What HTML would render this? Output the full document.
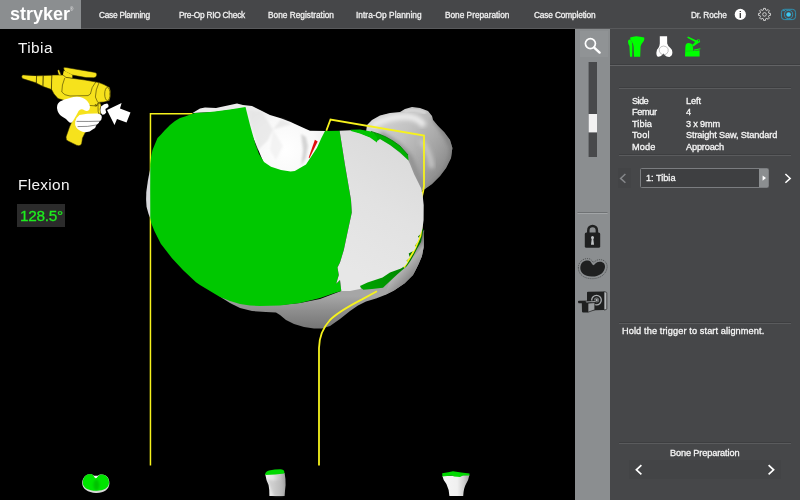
<!DOCTYPE html>
<html><head><meta charset="utf-8"><title>Bone Preparation</title>
<style>
html,body{margin:0;padding:0;background:#000;}
body{width:800px;height:500px;position:relative;overflow:hidden;font-family:"Liberation Sans",sans-serif;color:#fff;}
.abs{position:absolute;white-space:nowrap;}
.nav,.t,.big,#logo span,#logo i{will-change:transform;}
#top{left:0;top:0;width:800px;height:28px;background:#464749;border-bottom:1px solid #58595b;}
#logo{left:0;top:0;width:81px;height:29px;background:#8b8e90;}
#logo span{position:absolute;left:9.6px;top:3px;font-size:18px;font-weight:bold;line-height:22px;}
#logo i{position:absolute;left:69.6px;top:6.5px;font-size:4.5px;line-height:5px;font-style:normal;color:#e8e8e8;}
.nav{top:9.6px;font-size:8.3px;line-height:11px;color:#f0f0f0;-webkit-text-stroke:0.3px #f0f0f0;}
#side{left:575px;top:29px;width:35px;height:471px;background:#8b8e90;}
#panel{left:610px;top:29px;width:190px;height:471px;background:#464749;}
.hl{position:absolute;left:619px;width:171.5px;height:1px;background:#5a5b5d;border-top:1px solid #3d3e40;}
.t{font-size:9.2px;line-height:12px;color:#f6f6f6;-webkit-text-stroke:0.3px #f6f6f6;}
.big{font-size:15.4px;line-height:18px;color:#f4f4f4;}
</style></head><body>
<div id="top" class="abs"></div>
<div id="logo" class="abs"><span>stryker</span><i>®</i></div>
<div class="abs nav" style="left:99.4px;letter-spacing:-0.247px">Case Planning</div>
<div class="abs nav" style="left:179.4px;letter-spacing:-0.228px">Pre-Op RIO Check</div>
<div class="abs nav" style="left:268px;letter-spacing:0.002px">Bone Registration</div>
<div class="abs nav" style="left:356px;letter-spacing:0.036px">Intra-Op Planning</div>
<div class="abs nav" style="left:445px;letter-spacing:-0.012px">Bone Preparation</div>
<div class="abs nav" style="left:534.4px;letter-spacing:-0.146px">Case Completion</div>
<div class="abs nav" style="left:690.6px;letter-spacing:-0.136px">Dr. Roche</div>

<div id="side" class="abs"></div>
<div id="panel" class="abs"></div>

<div class="abs big" style="left:18px;top:38.8px;letter-spacing:0.42px">Tibia</div>
<div class="abs big" style="left:18px;top:175.9px;letter-spacing:0.31px">Flexion</div>
<div class="abs" style="left:17px;top:204px;width:48px;height:23px;background:#2b2b2b"></div>
<div class="abs big" style="left:20.2px;top:207.1px;color:#1eec1e;-webkit-text-stroke:0.3px #1eec1e;letter-spacing:-0.29px">128.5°</div>

<div class="hl" style="top:64px;left:610px;width:190px;background:#626365"></div>
<div class="hl" style="top:87px"></div>
<div class="hl" style="top:154px"></div>
<div class="hl" style="top:322px"></div>
<div class="hl" style="top:442px"></div>

<div class="abs t" style="left:631.7px;top:94.5px;letter-spacing:-0.597px">Side</div>
<div class="abs t" style="left:631.7px;top:106px;letter-spacing:-0.362px">Femur</div>
<div class="abs t" style="left:631.7px;top:117.5px;letter-spacing:0.080px">Tibia</div>
<div class="abs t" style="left:631.7px;top:129px;letter-spacing:0.214px">Tool</div>
<div class="abs t" style="left:631.7px;top:140.5px;letter-spacing:0.139px">Mode</div>
<div class="abs t" style="left:685.7px;top:94.5px;letter-spacing:-0.076px">Left</div>
<div class="abs t" style="left:685.7px;top:106px">4</div>
<div class="abs t" style="left:685.7px;top:117.5px;letter-spacing:-0.172px">3 x 9mm</div>
<div class="abs t" style="left:685.7px;top:129px;letter-spacing:-0.130px">Straight Saw, Standard</div>
<div class="abs t" style="left:685.7px;top:140.5px;letter-spacing:-0.178px">Approach</div>

<div class="abs" style="left:617.5px;top:167.5px;width:13.5px;height:20px;background:#434446"></div>
<div class="abs" style="left:640.2px;top:168px;width:129.3px;height:19.5px;border:1px solid #7b7d80;background:#3e3f41;box-sizing:border-box;border-radius:1.5px"></div>
<div class="abs" style="left:759.3px;top:169px;width:9.2px;height:17.5px;background:#8b8e90"></div>
<div class="abs t" style="left:645.7px;top:171.8px;letter-spacing:-0.018px">1: Tibia</div>
<div class="abs t" style="left:622px;top:324.5px;letter-spacing:0.110px">Hold the trigger to start alignment.</div>
<div class="abs" style="left:628.7px;top:459.5px;width:152px;height:19px;background:#434446"></div>
<div class="abs t" style="left:670px;top:446.5px;letter-spacing:-0.134px">Bone Preparation</div>

<svg class="abs" style="left:0;top:0" width="800" height="500" viewBox="0 0 800 500">
<defs>
<linearGradient id="gLump" x1="372" y1="112" x2="452" y2="168" gradientUnits="userSpaceOnUse">
<stop offset="0" stop-color="#d6d6d6"/><stop offset="0.4" stop-color="#c2c2c2"/><stop offset="0.75" stop-color="#a2a2a2"/><stop offset="1" stop-color="#868686"/>
</linearGradient>
<linearGradient id="gRim" x1="0" y1="296" x2="0" y2="328" gradientUnits="userSpaceOnUse">
<stop offset="0" stop-color="#a6a6a6"/><stop offset="0.45" stop-color="#8e8e8e"/><stop offset="1" stop-color="#767676"/>
</linearGradient>
<linearGradient id="gRimR" x1="404" y1="256" x2="419" y2="270" gradientUnits="userSpaceOnUse">
<stop offset="0" stop-color="#6a6a6a"/><stop offset="0.4" stop-color="#b2b2b2"/><stop offset="1" stop-color="#868686"/>
</linearGradient>
<radialGradient id="gNotch" cx="285" cy="150" r="45" gradientUnits="userSpaceOnUse">
<stop offset="0" stop-color="#ffffff"/><stop offset="0.7" stop-color="#f8f8f8"/><stop offset="1" stop-color="#ececec"/>
</radialGradient>
</defs>
<!-- femoral lump upper right -->
<clipPath id="cLump"><path d="M367,125 L372,120 L380,115.6 L390,113 L400,112 L405,109 L412,107 L420,108 L428,111 L432,116 L433,120 L438,126 L444,132 L450,140 L452.4,148 L451,158 L446,168 L440,176 L432,184 L425,189 L420,192 L400,170 L380,150 L366,132 Z"/></clipPath>
<filter id="b2" x="-30%" y="-30%" width="160%" height="160%"><feGaussianBlur stdDeviation="2.2"/></filter>
<filter id="b1" x="-30%" y="-30%" width="160%" height="160%"><feGaussianBlur stdDeviation="1.2"/></filter>
<g clip-path="url(#cLump)">
<rect x="360" y="100" width="100" height="100" fill="url(#gLump)"/>
<path d="M372,126 Q390,115 410,117 Q420,119 424,126" fill="none" stroke="#ececec" stroke-width="6" filter="url(#b2)"/>
<path d="M404,112 Q414,108 426,113" fill="none" stroke="#d8d8d8" stroke-width="3" filter="url(#b1)"/>
<path d="M380,134 Q398,142 410,158 Q416,172 422,188" fill="none" stroke="#8e8e8e" stroke-width="5" filter="url(#b2)"/>
<path d="M434,118 Q446,134 452,148 Q452,164 440,178 L428,190" fill="none" stroke="#7c7c7c" stroke-width="4" filter="url(#b2)"/>
<path d="M420,140 Q430,150 432,168" fill="none" stroke="#c6c6c6" stroke-width="5" filter="url(#b2)"/>
</g>
<!-- lower gray rim -->
<path fill="url(#gRim)" d="M218,294 L222,298 L230,303 L240,308 L252,311 L266,312 L276,312.4 L280,315 L286,320 L294,324 L304,327 L314,328.4 L322,328.4 L330,326 L340,319 L350,311 L358,305.6 L366,301.6 L376,298.6 L385,295 L394,290.5 L404.7,283.3 L413,275 L415.9,269.5 L418.6,264 L421.9,256.3 L423.6,247.5 L424.1,230 L420,235 L405,266 L360,286 L341,291 L320,299 L300,303 L280,305 L260,305 L242,303 Z"/>
<path fill="url(#gRimR)" d="M424.1,230 L423.6,247.5 L421.9,256.3 L418.6,264 L415.9,269.5 L413,275 L404.7,283.3 L394,290.5 L385,295 L390,280 L405,266 L410,256 L417,243 L421,234 Z"/>
<!-- dark green lower right band with teeth -->
<linearGradient id="gDG" x1="362" y1="288" x2="420" y2="240" gradientUnits="userSpaceOnUse">
<stop offset="0" stop-color="#00a400"/><stop offset="0.5" stop-color="#008c00"/><stop offset="1" stop-color="#006c00"/>
</linearGradient>
<path fill="url(#gDG)" d="M423.4,229 L422.6,234.3 L421,242 L417.2,248.6 L414.4,254.1 L410.6,260.7 L406.8,266.2 L401.4,270.8 L396.6,275 L392.5,278.8 L383,287.8 L372,289 L363.4,289.8 L359.8,287 L370,270 L400,245 L418,228 Z"/>
<!-- yellow lines -->
<g fill="none" stroke="#f6f21c" stroke-linejoin="miter">
<path stroke-width="1.5" d="M192.5,113.8 L150.45,113.8 L150.45,465.5"/>
<path stroke-width="1.8" d="M326.3,130.7 L330.5,119.5 L424,135.5 L424,186 L423.2,191 L421.6,198 L421.6,226 L421,232 L420.4,236 L418.3,241 L415.7,247 L412.7,253 L409.7,258 L406.7,263 L403.8,267.5"/>
<path stroke-width="1.8" d="M377,291.2 L362,299.4 C350,305.6 338,312 330,320 C323,327.6 319.2,336 319,348 L319,465.5"/>
</g>
<linearGradient id="gPlan" x1="350" y1="270" x2="420" y2="150" gradientUnits="userSpaceOnUse"><stop offset="0" stop-color="#e7e7e7"/><stop offset="0.5" stop-color="#e2e2e2"/><stop offset="1" stop-color="#dadada"/></linearGradient>
<!-- white bone (notch + left edge) -->
<path fill="url(#gNotch)" d="M192.5,113 L200,108.5 L205,107.5 L216,108 L230,105 L237,103.5 L243,105 L252,106 L260,110 L270,115 L280,118 L290.6,122 L306,129 L310,130.7 L326,131 L320,160 L295,175 L265,166 L250,130 L245,108 L215,112 Z"/>
<path fill="#d8d8dc" d="M150.6,167 Q147.6,180 146.3,192 Q145.8,200 146.6,207 Q148.2,214 150.6,219 L154,219 L154,167 Z"/>
<!-- shading in notch -->
<g filter="url(#b1)">
<path fill="#bcbcbc" opacity="0.6" d="M301,134 L306,137 L308,146 L306,158 L301,166 L303,150 Z"/>
<path fill="#e4e4e4" opacity="0.7" d="M262,112 L273,129.6 L268,140 L258,150 L252,128 L248,110 Z"/>
<path fill="#e6e6e6" opacity="0.8" d="M273,129.6 L292,124 L281,119 Z"/>
<path fill="#ececec" opacity="0.6" d="M273,129.6 L283,146 L276,160 L270,150 Z"/>
</g>
<!-- main green -->
<path fill="#00c800" d="M152.5,150 L155,144 L157.5,138 L161,134.5 L165,130 L170,125 L175,121 L180,118 L185,116.5 L189,115 L195,113 L205,112.5 L215,111.5 L230,109.5 L245.5,107 L250,125 L255.6,145 L259,154 L264,162 L271,166.7 L281,170 L290.6,171.6 L294.8,171 L306,164.6 L311.6,156 L317,147.8 L321.4,138 L325,131 L339.6,130.7 L345,165 L351,200 L351.8,212.5 L347.5,232.5 L343.8,250 L340,262.5 L337.5,267.5 L338.8,275 L336.2,283.8 L340,280 L341.3,291 L336,292.4 L320,298 L300,303 L280,305.6 L260,306 L250,305.6 L240,304 L230,301 L220,297 L210,291 L200,285 L196,282.2 L183.2,270.2 L172,258.2 L160.8,243.8 L154.4,231 L151.2,223 L150.3,218 L150.2,190 L150.3,164 L151.2,156 Z"/>
<!-- planar white -->
<path fill="url(#gPlan)" d="M339.6,130.7 L351,130.2 L360,133 L370,137 L377,142.5 L380,139 L390,145 L400,153 L408,160 L410,164 L414,174 L418,182 L421,188 L422.5,194 L423.7,205 L423.6,220 L422.5,228.8 L420.3,234.3 L418,236.5 L419.2,238.2 L417.5,242 L414.8,245.9 L415.9,247.5 L413.7,250.8 L408.7,253.6 L409.8,257.4 L406.5,260.7 L407.6,262.4 L404.3,266.2 L401,268.4 L390,272.6 L382.5,277.5 L367.5,282.5 L360,286 L361,288.8 L350,291 L341.3,291 L340,280 L336.2,283.8 L338.8,275 L337.5,267.5 L340,262.5 L343.8,250 L347.5,232.5 L351.8,212.5 L351,200 L345,165 Z"/>
<!-- green bits top -->
<path fill="#00c400" d="M350.6,129.8 L360,129.5 L371,131.4 L377,136 L377,142.5 L370,137.4 L360,133.4 L351,131 Z"/>
<path fill="#00b000" d="M371,131.4 L379,134 L386,137 L393,141 L400,146 L408,155 L408.6,160.4 L400,152.6 L390,145 L380,139 L377,141 L377,137 Z"/>
<path fill="none" stroke="#007c00" stroke-width="0.8" d="M371,131.4 L379,134 L386,137 L393,141 L400,146 L408,155"/>
<!-- red sliver -->
<path fill="#e00c0c" d="M314.9,139.8 L317.7,141.4 L309.4,158.2 L308.7,157.4 Z"/>
<!-- tool icon -->
<g id="tool" stroke-linejoin="round" stroke-linecap="round">
<g fill="#f6e21c" stroke="#2a2400" stroke-width="0.55">
<!-- handle -->
<path d="M80,106 L73,119 L69.5,127 L66,137 Q65.8,140 68,141 L76.5,145.2 Q80.8,146.6 81.7,143.6 L82.5,138 L85.5,132 L93,122 L100,112 L100,102 L84,100 Z"/>
<!-- top rail -->
<path d="M63.6,68.6 Q63.6,66.8 66,67.5 L95,72.4 Q97.6,73.2 96.6,75.6 Q96,78 93.5,77.7 L86,77.6 L72,75 L65,71.6 Z"/>
<path stroke="none" d="M63.8,70.4 L72.4,75 L72.4,78 L64.6,77.6 L62.8,75.2 Z"/>
<!-- small tab -->
<path d="M57.6,70.6 Q58.6,69 59.4,70.6 L61.4,75.4 L59,76 Z"/>
<!-- nose cone -->
<path d="M22.4,75 Q20.8,76.8 22.4,78.6 L36.6,83 L37,76 Z"/>
<path d="M37,75.8 L43.4,75.6 L43.2,86.6 L36.6,83.2 Z"/>
<path d="M43.5,75.5 L52.2,75.2 L51.6,89.6 L43.2,86.6 Z"/>
<!-- main body -->
<path d="M52.2,75 L63,75 L66,77.4 L85,80 L99,82.6 L104,84.6 L109.6,87.6 Q111.6,94 109.4,100.6 L104,102 L98,102.4 L97,106 L84,105 L80,108 L72,103 L67,101.2 L58,98.6 L54,94 L51.6,89.6 Z"/>
<!-- body panel -->
<path fill="none" d="M64.6,78.4 Q61.6,85 61.8,92 Q64,95.4 70,96 L88,95.6 L90.4,94 Q91.4,87 95.6,82.2"/>
<!-- rear cylinder -->
<path fill="none" d="M99,82.6 Q95.4,90 95.4,97 L97.4,101.6"/>
<ellipse cx="107.4" cy="94" rx="2.7" ry="6.6"/>
<!-- trigger -->
<path d="M98.6,103.4 Q101.6,103 101,106 Q99.4,109 100.6,112 Q101.4,114.6 99.4,114.4 Q97.6,112 98,108 Z"/>
<circle cx="95.6" cy="105.2" r="0.7"/>
</g>
<g fill="#ffffff" stroke="none">
<!-- hand back -->
<path d="M70,98 Q75,96.2 80,97 Q85,98 87.6,101.6 Q91,106 89.4,109.4 Q87,112.6 83,109.6 Q80.4,108.6 78.6,111 L76.5,115 L73,121 Q71,124.4 68.4,121.6 Q66,118.6 62,116.6 Q57.6,113.6 57,108 Q57,103.6 60,101.6 Q64,99 70,98 Z"/>
<!-- fingers -->
<path d="M79.5,115 Q88,113.4 97.4,113.6 Q102,114 101.8,117.4 Q101.8,120 99.6,121.2 Q99,123.6 96.4,125 Q96,128 92.6,129.6 Q90,132.4 85,132.2 Q79.6,131.6 76.6,128 Q74.4,125 75.2,121.6 Q76,117.4 79.5,115 Z"/>
<!-- index finger -->
<path d="M101,106.4 Q104,103.4 107.2,103.4 Q109.2,104.6 108.4,107 L105.4,109 Q105.6,111 106.2,112.4 Q104.6,115 102.2,114.6 Q100.4,113 100.4,110 Z"/>
<!-- arrow -->
<path d="M107,110 L121.6,103 L120,108.5 L130.5,112.5 L126.5,122.5 L117,119 L114.5,125 Z"/>
</g>
<!-- finger separators -->
<g fill="none" stroke="#1a1a1a" stroke-width="0.5">
<path d="M77,121.4 Q88,121.6 99.6,121.2"/>
<path d="M78,126.6 Q88,127 96.4,125"/>
</g>
</g>
<!-- top bar icons -->
<circle cx="740.3" cy="14.4" r="5.6" fill="#ffffff"/>
<text x="740.3" y="17.7" font-family="Liberation Sans, sans-serif" font-weight="bold" font-size="9.4" text-anchor="middle" fill="#333">i</text>
<g fill="none" stroke="#cccccc" stroke-width="1" stroke-linejoin="round">
<path d="M763.45,9.92 L763.50,8.38 L765.50,8.38 L765.55,9.92 L766.93,10.49 L768.05,9.44 L769.46,10.85 L768.41,11.97 L768.98,13.35 L770.52,13.40 L770.52,15.40 L768.98,15.45 L768.41,16.83 L769.46,17.95 L768.05,19.36 L766.93,18.31 L765.55,18.88 L765.50,20.42 L763.50,20.42 L763.45,18.88 L762.07,18.31 L760.95,19.36 L759.54,17.95 L760.59,16.83 L760.02,15.45 L758.48,15.40 L758.48,13.40 L760.02,13.35 L760.59,11.97 L759.54,10.85 L760.95,9.44 L762.07,10.49 Z"/>
<circle cx="764.5" cy="14.4" r="1.8"/>
</g>
<g fill="none" stroke="#2b9fc6" stroke-width="0.85">
<rect x="781.4" y="9.3" width="14.2" height="10.3" rx="3.2"/>
<circle cx="788.6" cy="14.5" r="4.1"/>
<path d="M783,10.6 L785,10.6" stroke-width="0.9"/>
</g>
<circle cx="788.6" cy="14.5" r="2.3" fill="#3ec6f0"/>
<!-- sidebar -->
<rect x="580" y="31" width="28" height="26" fill="#909395"/>
<circle cx="590.4" cy="43.6" r="5" fill="none" stroke="#ffffff" stroke-width="1.7"/>
<path d="M594.2,47.6 L599.6,52.6" stroke="#ffffff" stroke-width="2.4" stroke-linecap="round"/>
<rect x="588.6" y="62" width="8.4" height="95" fill="#48494b"/>
<rect x="588.6" y="114" width="8.4" height="18.4" fill="#f2f2f2"/>
<rect x="577.5" y="212" width="30" height="1" fill="#6f7274"/>
<rect x="577.5" y="213" width="30" height="1" fill="#a2a5a7"/>
<!-- lock -->
<rect x="584.8" y="232.5" width="15.4" height="15.3" rx="1.6" fill="#1f2020"/>
<path d="M588.3,233 L588.3,230.4 A4.3,4.5 0 0 1 596.9,230.4 L596.9,233" fill="none" stroke="#1f2020" stroke-width="2.5"/>
<circle cx="592.5" cy="237.4" r="1.5" fill="#c0c3c5"/>
<path d="M591.8,238 L593.2,238 L594,244.8 L591,244.8 Z" fill="#c0c3c5"/>
<!-- kidney -->
<path d="M580.3,268 C580.3,262.5 584.5,260.2 588,260.6 C591.4,261 592,265 593.2,265.2 C594.6,265.2 595.6,262 599.6,261.8 C603.2,261.6 605.2,264 605,267 C604.6,272 600,276.8 591.6,276.6 C584.6,276.4 580.3,272.6 580.3,268 Z" fill="#1f2020"/>
<path d="M578.4,268 C578.2,261 584,258.2 588.4,258.6 C591.6,259 592.6,262 593.4,262.2 C594.6,262.2 596,259.6 599.8,259.6 C604.6,259.6 607.4,263 607.1,267.2 C606.6,273.6 600.6,278.9 591.6,278.7 C583.6,278.5 578.4,274 578.4,268 Z" fill="none" stroke="#1f2020" stroke-width="0.5" stroke-dasharray="1.1 0.9"/>
<!-- CT scanner -->
<g>
<path d="M587,292.6 Q587,291.7 588,291.7 L604,291.4 L604,310 L587,310.6 Z" fill="#1f2020"/>
<path d="M604,291.6 L606.2,292.2 Q606.8,292.4 606.8,293 L606.8,308.6 Q606.8,309.4 606,309.6 L604,310 Z" fill="#b4b7b9" stroke="#1f2020" stroke-width="0.7"/>
<circle cx="596.5" cy="300.1" r="4.8" fill="none" stroke="#a9acae" stroke-width="1.3"/>
<circle cx="596.5" cy="300.1" r="2.5" fill="#85888a"/>
<circle cx="596.5" cy="300.1" r="1.6" fill="none" stroke="#1f2020" stroke-width="0.5"/>
<circle cx="596.7" cy="300.1" r="0.8" fill="#c4c7c9"/>
<path d="M578,301.4 Q578,300.7 579,300.7 L595.6,300.4 L595.6,302.6 L588,303.2 L578.6,303.2 Q578,302.6 578,301.4 Z" fill="#1f2020"/>
<path d="M585.4,301.5 L595.6,301 L595.6,302 L586.6,302.4 Z" fill="#9c9fa1"/>
<path d="M581.8,303 L588,303 L588,312.4 L582.8,312.4 Q582,312.4 582,311.6 Z" fill="#1f2020"/>
<path d="M588,303.2 L594.8,302.6 L594.8,309.8 L588,312.2 Z" fill="#9a9d9f" stroke="#1f2020" stroke-width="0.7"/>
</g>
<!-- panel icons -->
<g fill="#00ff00">
<path d="M630.2,37.6 Q633,36.6 636.3,36.3 Q640,36.6 644.2,37.6 Q644.6,39.4 643.8,41 Q641.4,43.6 640.6,46.4 L640.2,56.8 L634,56.8 L633.6,46.4 Q633.2,43.6 631.6,41.6 Q629.8,39.6 630.2,37.6 Z"/>
<path d="M628,41.4 Q628.2,39.6 629.6,39.6 Q631.4,40.2 632,42.6 L632.4,46 L632.2,56.8 L630,56.8 L629.4,46 Q628,43.6 628,41.4 Z"/>
<path d="M685.4,47 Q685.4,43 688.6,43 Q691,43 692.6,44.6 L693.4,51 L699.6,50.2 L699.6,56.4 L685,56.4 Z"/>
<path d="M687.2,37.8 L688,36.6 L697,40.8 L696.2,42.4 Z"/>
<path d="M692.4,45 L697.4,39.6 L699.6,39.4 L700.2,42 L697.6,43.6 L693.4,46.6 Z"/>
<path d="M694,49.4 L700.4,48.2 L700.4,49.2 L694,50.8 Z"/>
</g>
<circle cx="698.6" cy="40.8" r="0.7" fill="#464749"/>
<path d="M685.8,51.2 L693,50.8" stroke="#22a822" stroke-width="0.4" fill="none"/>
<path d="M659.8,36.2 L667.1,36.2 L667.2,43.6 Q668,46.6 670.4,48 Q672.6,49.6 672.4,52.6 Q672.2,56.4 669.4,56.9 Q666.4,57 664.6,55 L663.4,53.6 L662.2,55 Q660.4,57 658,56.8 Q656.2,56.2 656.4,52.6 Q656.6,49.4 658.4,48 Q659.6,46.6 659.8,43.6 Z" fill="#ffffff"/>
<path d="M663.6,46 Q667,46.2 668.2,49 Q668.8,52 666.4,54 Q663.8,55.8 661.2,54 Q658.8,52 659.2,49 Q660.4,46.2 663.6,46 Z" fill="none" stroke="#868686" stroke-width="0.5"/>
<!-- chevrons -->
<g fill="none" stroke-width="1.5" stroke-linecap="butt" stroke-linejoin="miter">
<path d="M625.4,174 L620.6,178.4 L625.4,182.8" stroke="#85878a"/>
<path d="M785.4,174 L790.2,178.4 L785.4,182.8" stroke="#ffffff"/>
<path d="M641.4,465.2 L636.4,469.8 L641.4,474.4" stroke="#ffffff" stroke-width="1.7"/>
<path d="M768.6,465.2 L773.6,469.8 L768.6,474.4" stroke="#ffffff" stroke-width="1.7"/>
</g>
<path d="M762.6,175.4 L766,178.1 L762.6,180.8 Z" fill="#ffffff"/>
<!-- thumbnails -->
<defs>
<linearGradient id="gT2" x1="266" y1="0" x2="286" y2="0" gradientUnits="userSpaceOnUse">
<stop offset="0" stop-color="#f0f0f0"/><stop offset="0.35" stop-color="#e4e4e4"/><stop offset="0.7" stop-color="#c4c4c4"/><stop offset="1" stop-color="#9a9a9a"/>
</linearGradient>
<linearGradient id="gT3" x1="443" y1="0" x2="469" y2="0" gradientUnits="userSpaceOnUse">
<stop offset="0" stop-color="#f6f6f6"/><stop offset="0.55" stop-color="#f0f0f0"/><stop offset="0.8" stop-color="#d0d0d0"/><stop offset="1" stop-color="#a8a8a8"/>
</linearGradient>
<radialGradient id="gT1" cx="97" cy="484" r="4" gradientUnits="userSpaceOnUse" gradientTransform="translate(0,0)">
<stop offset="0" stop-color="#00a800"/><stop offset="1" stop-color="#00e000"/>
</radialGradient>
</defs>
<!-- t1 -->
<path d="M82.2,483 C82.2,477.4 86.4,474 90.4,474.2 C92.8,474.4 93.6,475.4 94.2,476 L97.8,476 C98.6,475 99.4,474.6 102,474.6 C106.4,474.6 109.6,478.4 109.4,483.6 C109.2,489.6 103.6,493.2 96,493 C88,492.6 82.2,489 82.2,483 Z" fill="#dadada"/>
<path d="M82.8,482.4 C82.8,477 86.6,473.8 90.4,474 C92.8,474.2 93.4,475.6 94.2,476.8 Q95.8,479.6 97.6,476.8 C98.4,475.4 99.2,474.4 102,474.4 C106.2,474.4 109.2,478 109,482.8 C108.8,488 103.6,491 96,490.8 C88.6,490.6 82.8,487.8 82.8,482.4 Z" fill="#00e400"/>
<ellipse cx="96.4" cy="485" rx="3" ry="5.4" fill="#00a000" opacity="0.5" filter="url(#b1)"/>
<path d="M93.6,475.8 L98.2,475.8 Q97.4,476.4 96.8,477.6 Q95.8,479 94.8,477.6 Q94.4,476.6 93.6,475.8 Z" fill="#f6f6f6"/>
<!-- t2 -->
<path d="M265.2,474 L284.6,473 Q285.8,479 285.6,485 Q285,490 284.6,496 L269.4,496 Q269.6,490 268.6,485 Q266,480 265.2,474 Z" fill="url(#gT2)"/>
<path d="M267,479 Q272,481.6 280,479.6 L284,486 L283,496 L274,496 Z" fill="#b8b8b8" opacity="0.5" filter="url(#b1)"/>
<path d="M265.2,475 Q264.8,471.4 269,470.4 Q276,469.2 282,469.4 Q284.8,470 284.4,473.4 Q276,474.6 265.2,475 Z" fill="#00d800"/>
<!-- t3 -->
<path d="M442.4,476 L469.4,475 Q468.6,480 466,484 Q463.6,488 463.2,496 L449.4,496 Q449,489 446.4,484 Q443,480 442.4,476 Z" fill="url(#gT3)"/>
<path d="M442.2,473.2 Q449,472.4 453,471.2 Q461,472.4 469.6,473.4 L469.4,475.4 L463,475.6 L460,477 L454,476.6 L452,475.4 L442.4,476.6 Z" fill="#00d800"/>
</svg>
</body></html>
